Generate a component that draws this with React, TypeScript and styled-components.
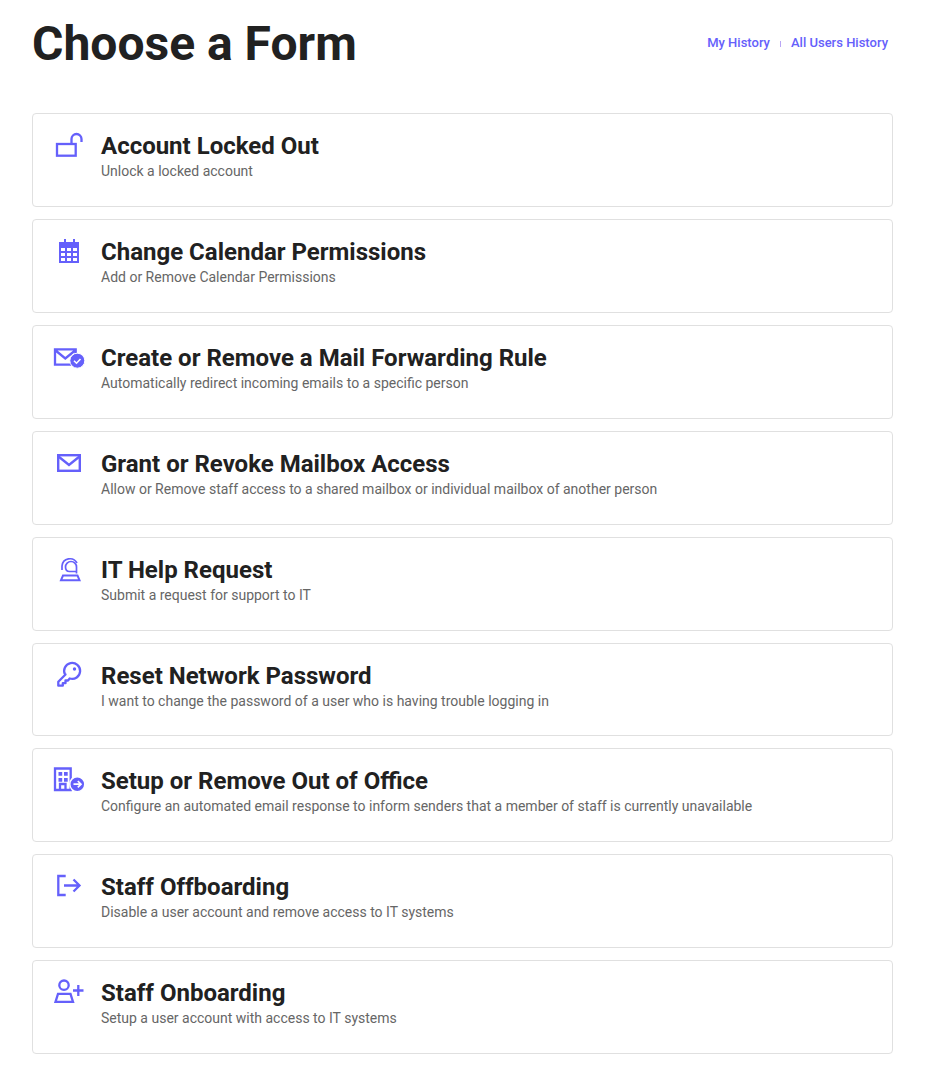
import * as React from "react"
import styled, { createGlobalStyle } from "styled-components"

const accent = "#6560fb"

const GlobalStyle = createGlobalStyle`
    html, body {
        margin: 0;
        padding: 0;
        background: #fff;
        font-family: Roboto, "Liberation Sans", sans-serif;
    }
`

const Page = styled.div`
    padding: 0 34px 21px 32px;
`

const Header = styled.header`
    display: flex;
    justify-content: space-between;
    align-items: center;
    height: 87px;
    margin-bottom: 26.2px;
`

const Title = styled.h1`
    margin: 0;
    font-size: 48px;
    line-height: 56px;
    font-weight: 700;
    color: #212121;
`

const HistoryNav = styled.nav`
    display: flex;
    align-items: center;
    padding: 0 5px 2px 0;
    font-size: 13px;
    font-weight: 500;
`

const HistoryLink = styled.a`
    color: ${accent};
    text-decoration: none;
`

const Divider = styled.span`
    width: 1px;
    height: 6px;
    margin: 2px 10px 0;
    background: #b9a6f5;
`

const FormList = styled.div`
    display: flex;
    flex-direction: column;
    gap: 12px;
`

const Card = styled.a`
    box-sizing: border-box;
    display: flex;
    height: 93.875px;
    padding: 18px 20px 0 20px;
    border: 1px solid #e0e0e0;
    border-radius: 4px;
    text-decoration: none;
`

const IconBox = styled.div`
    flex: 0 0 32px;
    height: 32px;
    margin-right: 16px;
`

const CardTitle = styled.h2`
    margin: 0 0 1px;
    font-size: 24px;
    line-height: 28px;
    font-weight: 700;
    color: #212121;
`

const CardText = styled.p`
    margin: 0;
    font-size: 14px;
    line-height: 20px;
    color: #666;
`

const Svg = styled.svg.attrs({ viewBox: "0 0 32 32", width: 32, height: 32 })`
    display: block;
    overflow: visible;
    fill: none;
    stroke: ${accent};
    stroke-width: 2.3;
`

const forms = [
    {
        title: "Account Locked Out",
        text: "Unlock a locked account",
        icon: (
            <Svg>
                <rect x="4" y="12" width="18.700" height="11.700" />
                <path d="M18.500 12V7a5 5 0 0 1 10 0v3" />
            </Svg>
        ),
    },
    {
        title: "Change Calendar Permissions",
        text: "Add or Remove Calendar Permissions",
        icon: (
            <Svg>
                <path
                    d="M6 4h5V1h2v3h7V1h2v3h4v21H6zM8 10v3h4v-3zm6 0v3h4v-3zm6 0v3h4v-3zM8 15v3h4v-3zm6 0v3h4v-3zm6 0v3h4v-3zM8 20v3h4v-3zm6 0v3h4v-3zm6 0v3h4v-3z"
                    fill={accent}
                    stroke="none"
                    fillRule="evenodd"
                />
            </Svg>
        ),
    },
    {
        title: "Create or Remove a Mail Forwarding Rule",
        text: "Automatically redirect incoming emails to a specific person",
        icon: (
            <Svg>
                <path d="M22.700 20.700H2V5.300h20.700v10M2 6l10.300 8.500L22.700 6" />
                <circle cx="24.300" cy="16.700" r="7.500" fill={accent} stroke="#fff" strokeWidth="1" />
                <path d="M21 16.700l2.500 2.500 4-4.200" stroke="#fff" strokeWidth="1.600" />
            </Svg>
        ),
    },
    {
        title: "Grant or Revoke Mailbox Access",
        text: "Allow or Remove staff access to a shared mailbox or individual mailbox of another person",
        icon: (
            <Svg>
                <rect x="5.200" y="5.200" width="21.600" height="15.600" strokeWidth="2.400" />
                <path d="M5.500 6.500L16 15 26.500 6.500" strokeWidth="2.400" />
            </Svg>
        ),
    },
    {
        title: "IT Help Request",
        text: "Submit a request for support to IT",
        icon: (
            <Svg>
                <path d="M10 19.500h14.500l2 4.700H8z" strokeWidth="2" />
                <path d="M9 14V10a8 8 0 0 1 15-3" strokeWidth="1.700" />
                <path d="M23.500 17.500V11a5.500 5.500 0 1 0-11 0c0 3 1.800 4.500 4 4.500h7" strokeWidth="1.700" />
            </Svg>
        ),
    },
    {
        title: "Reset Network Password",
        text: "I want to change the password of a user who is having trouble logging in",
        icon: (
            <Svg>
                <path d="M12.500 12.500L5.300 19.700v4h4.500v-2.500h2.700v-2.700h2.500l1.700-2a8 8 0 1 0-4.700-4z" strokeLinejoin="round" />
                <circle cx="21.500" cy="7" r="1.700" fill={accent} stroke="none" />
            </Svg>
        ),
    },
    {
        title: "Setup or Remove Out of Office",
        text: "Configure an automated email response to inform senders that a member of staff is currently unavailable",
        icon: (
            <Svg>
                <path d="M2 1.500h15.700v21.500H2z" />
                <path d="M7 23v-6h5.500v6" />
                <path
                    d="M5.500 5h3.700v3.700H5.500zm5.500 0h3.700v3.700H11zM5.500 11h3.700v3.700H5.500zm5.500 0h3.700v3.700H11z"
                    fill={accent}
                    stroke="none"
                />
                <circle cx="24.300" cy="17.200" r="7.500" fill={accent} stroke="#fff" strokeWidth="1.500" />
                <path d="M20.500 17.200h7.500M24.800 14l3.200 3.200-3.200 3.200" stroke="#fff" strokeWidth="1.700" />
            </Svg>
        ),
    },
    {
        title: "Staff Offboarding",
        text: "Disable a user account and remove access to IT systems",
        icon: (
            <Svg>
                <path d="M12.700 3H5.300v19h7.400" />
                <path d="M11 12.500h15.500M20.500 6.500l6 6-6 6" />
            </Svg>
        ),
    },
    {
        title: "Staff Onboarding",
        text: "Setup a user account with access to IT systems",
        icon: (
            <Svg>
                <circle cx="11" cy="6.200" r="4.700" />
                <path d="M5 14.800h12.500l2.500 8H2.500z" />
                <path d="M20 11.500h10.500M25.300 6v11" />
            </Svg>
        ),
    },
]

const App: React.FC = () => {
    return (
        <Page>
            <GlobalStyle />
            <Header>
                <Title>Choose a Form</Title>
                <HistoryNav>
                    <HistoryLink>My History</HistoryLink>
                    <Divider />
                    <HistoryLink>All Users History</HistoryLink>
                </HistoryNav>
            </Header>
            <FormList>
                {forms.map((form) => (
                    <Card key={form.title}>
                        <IconBox>{form.icon}</IconBox>
                        <div>
                            <CardTitle>{form.title}</CardTitle>
                            <CardText>{form.text}</CardText>
                        </div>
                    </Card>
                ))}
            </FormList>
        </Page>
    )
}

export default App
